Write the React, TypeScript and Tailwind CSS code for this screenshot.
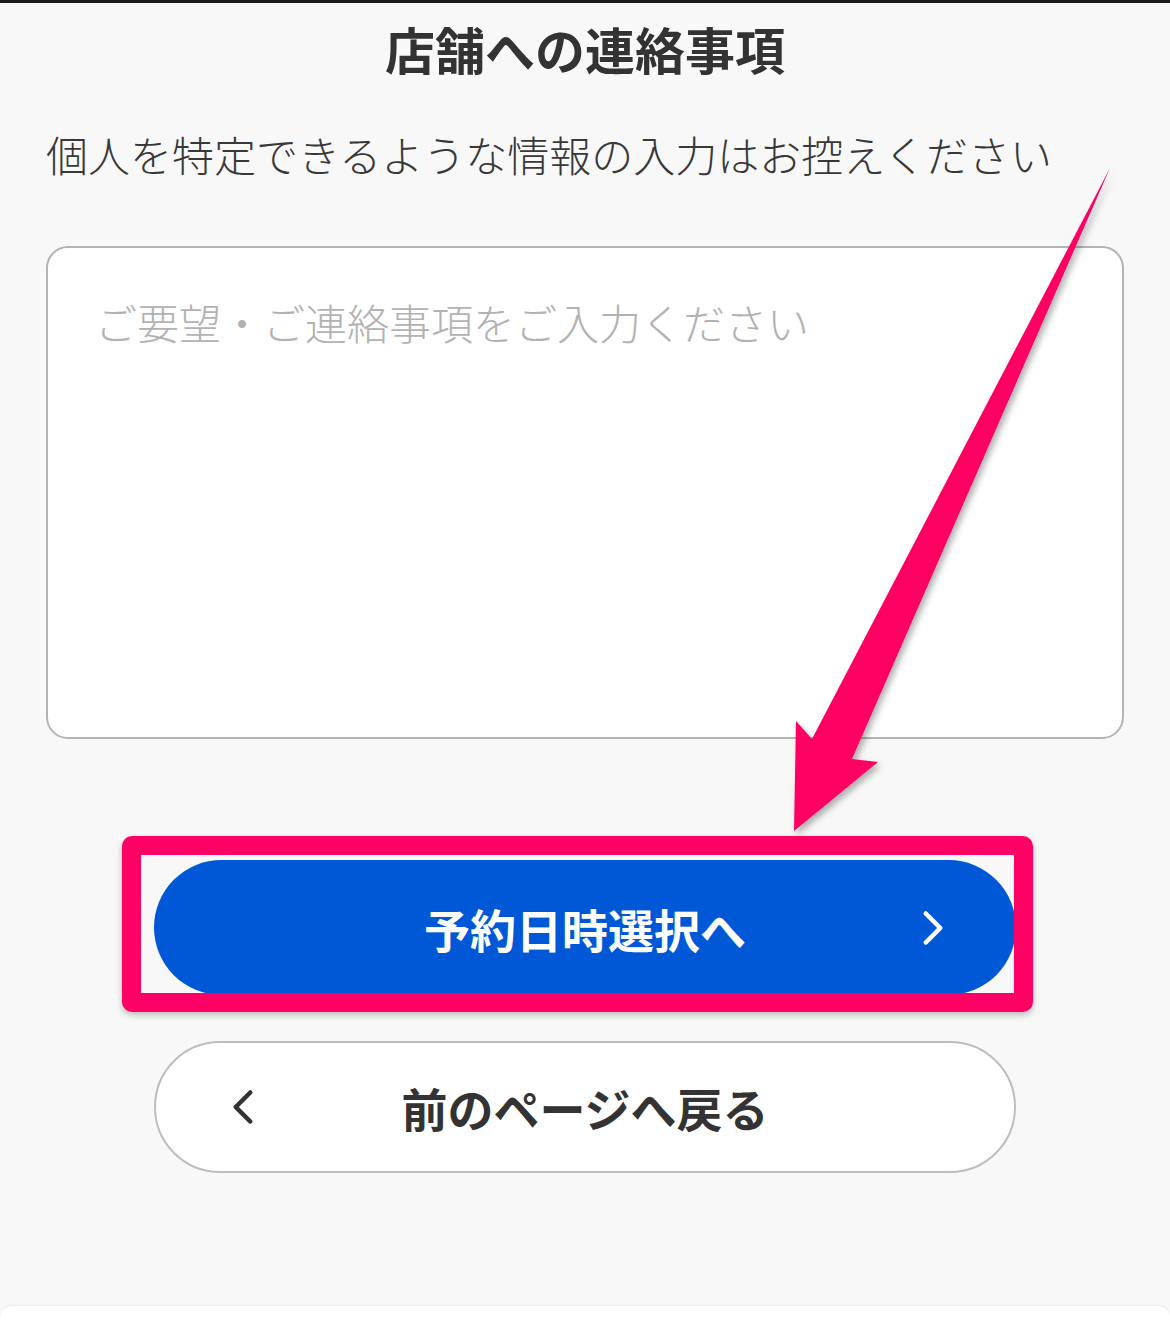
import { ChevronLeft, ChevronRight } from "lucide-react";

const font = { fontFamily: '"Noto Sans CJK JP", "Noto Sans", sans-serif' };

function Arrow() {
  return (
    <svg
      className="pointer-events-none absolute left-0 top-0"
      width="1170"
      height="1322"
      viewBox="0 0 1170 1322"
    >
      <defs>
        <filter id="arrowShadow" x="-20%" y="-20%" width="140%" height="140%">
          <feDropShadow dx="3" dy="4" stdDeviation="3" floodColor="#000" floodOpacity="0.3" />
        </filter>
      </defs>
      <polygon
        points="1110,168 852,759 878,762 794,831 796,721 812,739"
        fill="#ff0062"
        filter="url(#arrowShadow)"
      />
    </svg>
  );
}

export default function App() {
  return (
    <main style={font} className="relative flex min-h-[1322px] flex-col overflow-hidden bg-[#f8f8f8]">
      <div className="h-[3px] bg-[#1c1c1c]" />

      <h1 className="mt-[15px] text-center text-[50px] font-bold leading-[60px] text-[#333]">
        店舗への連絡事項
      </h1>

      <div className="px-[46px]">
        <p className="mt-[50px] text-[42px] font-light leading-[52px] text-[#383838]">
          個人を特定できるような情報の入力はお控えください
        </p>

        <textarea
          placeholder="ご要望・ご連絡事項をご入力ください"
          className="mt-[66px] block h-[493px] w-full resize-none rounded-[22px] border-2 border-[#b4b4b4] bg-white pl-[47px] pr-[40px] pt-[48px] text-[42px] font-light leading-[52px] text-[#333] outline-none placeholder:text-[#b2b2b2]"
        />
      </div>

      <div className="relative mx-auto mt-[121px] w-[862px]">
        <button className="grid h-[135px] w-full grid-cols-[1fr_auto_1fr] items-center rounded-full bg-[#0058d7] text-[46px] font-bold text-white">
          <span />
          <span className="leading-none">予約日時選択へ</span>
          <span className="flex justify-end pr-[54px]">
            <ChevronRight size={58} strokeWidth={1.9} />
          </span>
        </button>
        <div className="pointer-events-none absolute -bottom-[17px] -left-[32px] -right-[17px] -top-[24px] rounded-[10px] border-[19px] border-[#ff0064] shadow-[0_3px_6px_rgba(0,0,0,0.25)]" />
      </div>

      <button className="mx-auto mt-[46px] grid h-[132px] w-[862px] grid-cols-[1fr_auto_1fr] items-center rounded-full border-2 border-[#bdbdbd] bg-white text-[46px] font-bold text-[#333]">
        <span className="flex justify-start pl-[58px]">
          <ChevronLeft size={58} strokeWidth={1.9} />
        </span>
        <span className="leading-none">前のページへ戻る</span>
        <span />
      </button>

      <div className="mt-auto h-[16px] rounded-t-[12px] bg-white shadow-[0_-1px_2px_rgba(0,0,0,0.06)]" />

      <Arrow />
    </main>
  );
}
